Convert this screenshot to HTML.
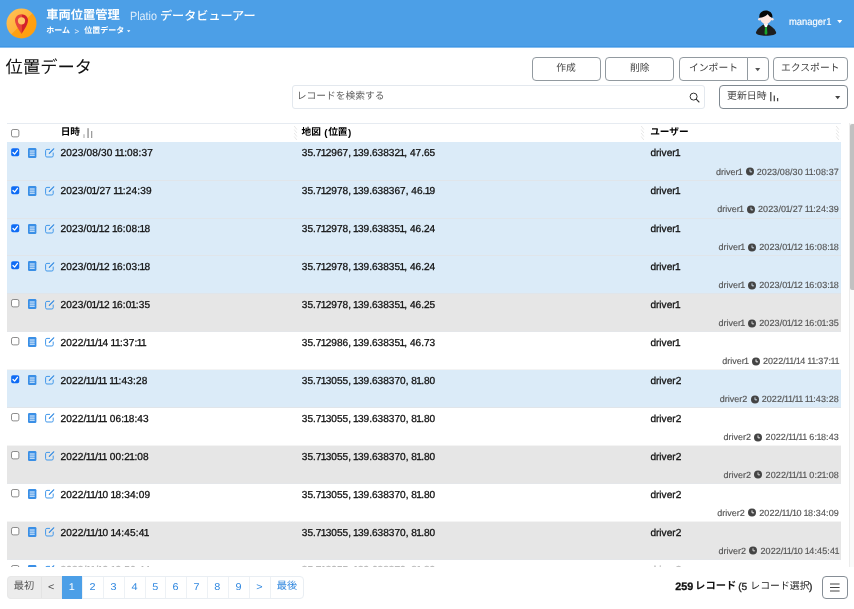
<!DOCTYPE html>
<html lang="ja"><head><meta charset="utf-8"><title>Platio</title><style>
html,body{margin:0;padding:0;background:#fff}
body{width:854px;height:609px;position:relative;overflow:hidden;font-family:"Liberation Sans","Noto Sans CJK JP",sans-serif;text-rendering:geometricPrecision}
.b,.a,.t,.j{position:absolute;display:block}
.b{box-sizing:border-box}
.t{line-height:1;white-space:nowrap;-webkit-text-stroke:.28px}
.p{text-align:center;font-size:9.9px;-webkit-text-stroke:0;transform:scaleX(1.1)}
.j{overflow:visible;line-height:1;font-family:"Liberation Sans","Noto Sans CJK JP",sans-serif}
.m{position:absolute;right:15.1px;height:9px;display:flex;align-items:center;font-size:9px;line-height:1;color:#555;white-space:nowrap;-webkit-text-stroke:.15px}
.m span{letter-spacing:.11px}
.m .u{letter-spacing:0}
.m svg{transform:translateY(-.4px)}
i{font-style:normal;margin:0 -.07em}
.j span{position:absolute;left:0;top:0;white-space:nowrap;line-height:1}
svg{overflow:visible}
#app{position:absolute;left:0;top:0;width:854px;height:609px;overflow:hidden}
#aa{position:absolute;left:0;top:0;width:1px;height:1px;mix-blend-mode:multiply}
</style></head>
<body>
<div id="app">
<div class="b" style="left:0px;top:0px;width:854px;height:46px;background:#4c9fe7"></div>
<div class="b" style="left:0px;top:46px;width:854px;height:1px;background:#3f97e5"></div>
<div class="b" style="left:0px;top:47px;width:854px;height:1px;background:#86bdee"></div>
<svg class="a" style="left:6px;top:8px" width="31" height="31" viewBox="0 0 31 31">
<defs><linearGradient id="lg" x1="0" y1="0" x2="1" y2="1"><stop offset="0" stop-color="#ffc35a"/><stop offset=".5" stop-color="#ffb23a"/><stop offset=".52" stop-color="#ffa114"/><stop offset="1" stop-color="#ff9e0f"/></linearGradient></defs>
<circle cx="15.5" cy="15.5" r="15" fill="url(#lg)"/>
<path d="M15.5 6.2c-3.6 0-6.5 2.8-6.5 6.2 0 4.5 6.5 13.3 6.5 13.3z" fill="#e8453c"/>
<path d="M15.5 6.2c3.6 0 6.5 2.8 6.5 6.2 0 4.5-6.5 13.3-6.5 13.3z" fill="#d3202b"/>
<circle cx="15.5" cy="12.8" r="3.6" fill="#ffc566"/>
</svg>
<div class="j" style="left:46.2px;top:9.3px;width:73.50px;height:12.25px;font-size:12.25px;color:#fff;font-weight:bold"><span>車両位置管理</span></div>
<span class="t" style="left:129.7px;top:9.8px;font-size:12px;color:rgba(255,255,255,.82);transform:scaleX(.9);transform-origin:0 0;-webkit-text-stroke:0">Platio</span>
<div class="j" style="left:160px;top:9.5px;width:96.80px;height:12.1px;font-size:12.1px;color:#fff;font-weight:500"><span>データビューアー</span></div>
<div class="j" style="left:46.3px;top:27.3px;width:24.00px;height:8px;font-size:8px;color:#fff;font-weight:bold"><span>ホーム</span></div>
<span class="t" style="left:74.5px;top:27.5px;font-size:8px;color:#e8f2fc;-webkit-text-stroke:0">&gt;</span>
<div class="j" style="left:84.3px;top:27.3px;width:40.00px;height:8px;font-size:8px;color:#fff;font-weight:bold"><span>位置データ</span></div>
<svg class="a" style="left:126.6px;top:30.1px" width="3.4" height="2.4" viewBox="0 0 8 5"><path d="M0 0h8L4 5z" fill="#fff"/></svg>
<svg class="a" style="left:755px;top:10px" width="23" height="26" viewBox="0 0 23 26">
<path d="M8.6 14.4C5 16.4 1.6 19.4.9 22.7c0 1.8 4.1 3 10 3s10.3-1.2 10.3-3c-.7-3.3-4-6.3-8-8.3z" fill="#1e1e1e"/>
<path d="M8.7 14l2.2 5.5L13.1 14z" fill="#fff"/>
<path d="M10 17h1.9l.5 6.6-1.4 1.5-1.5-1.5z" fill="#17a42b"/>
<circle cx="4.4" cy="9.3" r="1.3" fill="#fde5df"/><circle cx="17.3" cy="9.3" r="1.3" fill="#fde5df"/>
<path d="M5 8c0 3.5 3.5 5.6 5.8 6.9 2.3-1.3 5.8-3.4 5.8-6.9 0-5-11.6-5-11.6 0z" fill="#fde5df"/>
<path d="M4.4 7.7C3.6 3.5 6.8.6 10.8.6s7.3 2.9 6.5 7.1c-1.9-.3-3.7-1.6-4.6-3.6C11.5 6.1 8 7.7 4.4 7.7z" fill="#050505"/>
</svg>
<span class="t" style="left:788.6px;top:17.9px;font-size:10.2px;color:#fff;transform:scaleX(.925);transform-origin:0 0;-webkit-text-stroke:.15px">manager1</span>
<svg class="a" style="left:836.8px;top:20px" width="5.4" height="3.2" viewBox="0 0 8 5"><path d="M0 0h8L4 5z" fill="#fff"/></svg>
<div class="j" style="left:5.6px;top:59.1px;width:86.50px;height:17.3px;font-size:17.3px;color:#111"><span>位置データ</span></div>
<div class="b" style="left:532px;top:57.3px;width:68.5px;height:23.6px;border:1px solid #929aa0;border-radius:4px;background:#fff;"></div>
<div class="j" style="left:556.3px;top:64.2px;width:19.60px;height:9.8px;font-size:9.8px;color:#444"><span>作成</span></div>
<div class="b" style="left:605.3px;top:57.3px;width:68.5px;height:23.6px;border:1px solid #929aa0;border-radius:4px;background:#fff;"></div>
<div class="j" style="left:630px;top:64.2px;width:19.60px;height:9.8px;font-size:9.8px;color:#444"><span>削除</span></div>
<div class="b" style="left:679px;top:57.3px;width:68.7px;height:23.6px;border:1px solid #929aa0;border-radius:4px;background:#fff;border-radius:4px 0 0 4px"></div>
<div class="j" style="left:689px;top:64.2px;width:49.00px;height:9.8px;font-size:9.8px;color:#444"><span>インポート</span></div>
<div class="b" style="left:746.7px;top:57.3px;width:22px;height:23.6px;border:1px solid #929aa0;border-radius:4px;background:#fff;border-radius:0 4px 4px 0"></div>
<svg class="a" style="left:755px;top:67.9px" width="5.4" height="3.2" viewBox="0 0 8 5"><path d="M0 0h8L4 5z" fill="#555"/></svg>
<div class="b" style="left:773.3px;top:57.3px;width:74.4px;height:23.6px;border:1px solid #929aa0;border-radius:4px;background:#fff;"></div>
<div class="j" style="left:781px;top:64.2px;width:58.80px;height:9.8px;font-size:9.8px;color:#444"><span>エクスポート</span></div>
<div class="b" style="left:292.2px;top:85.4px;width:413.1px;height:23.2px;border:1px solid #e3e8ee;border-radius:3px;background:#fff"></div>
<div class="j" style="left:296.7px;top:91.9px;width:87.75px;height:9.75px;font-size:9.75px;color:#606060"><span>レコードを検索する</span></div>
<svg class="a" style="left:688.5px;top:92.3px" width="11" height="11" viewBox="0 0 11 11"><circle cx="4.6" cy="4.6" r="3.5" fill="none" stroke="#333" stroke-width="1"/><path d="M7.2 7.2L10 10" stroke="#333" stroke-width="1.1" stroke-linecap="round"/></svg>
<div class="b" style="left:718.9px;top:85.3px;width:128.9px;height:23.4px;border:1px solid #7f8890;border-radius:4px;background:#fff;"></div>
<div class="j" style="left:727.1px;top:92px;width:39.60px;height:9.9px;font-size:9.9px;color:#444"><span>更新日時</span></div>
<svg class="a" style="left:769.5px;top:92.2px" width="9" height="9.3" viewBox="0 0 9 9.3"><path d="M.8 0v9.3M4.3 3.4v5.9M7.6 6v3.3" stroke="#444" stroke-width="1.25"/></svg>
<svg class="a" style="left:834.5px;top:96px" width="5.4" height="3.2" viewBox="0 0 8 5"><path d="M0 0h8L4 5z" fill="#444"/></svg>
<div class="b" style="left:6.6px;top:122.9px;width:834.1999999999999px;height:1px;background:#e6ebf1"></div>
<svg class="a" style="left:10.9px;top:128.8px" width="8.4" height="8.4" viewBox="0 0 10 10"><rect x=".6" y=".6" width="8.8" height="8.8" rx="2" fill="#fff" stroke="#777" stroke-width="1"/></svg>
<div class="j" style="left:60.7px;top:128.4px;width:19.40px;height:9.7px;font-size:9.7px;color:#000;font-weight:bold"><span>日時</span></div>
<svg class="a" style="left:82.5px;top:127.8px" width="10" height="10" viewBox="0 0 10 10"><path d="M1 6.2v3.8" stroke="#b4b4b4" stroke-width="1.2"/><path d="M5.05 .2v9.8" stroke="#6c6c6c" stroke-width="1"/><path d="M8.7 3v7" stroke="#8c8c8c" stroke-width="1.1"/></svg>
<div class="j" style="left:301.6px;top:128.4px;width:19.40px;height:9.7px;font-size:9.7px;color:#000;font-weight:bold"><span>地図</span></div>
<span class="t" style="left:324.3px;top:128.5px;font-size:9.8px;color:#000;font-weight:bold;-webkit-text-stroke:0">(</span>
<div class="j" style="left:328.2px;top:128.4px;width:19.40px;height:9.7px;font-size:9.7px;color:#000;font-weight:bold"><span>位置</span></div>
<span class="t" style="left:348.1px;top:128.5px;font-size:9.8px;color:#000;font-weight:bold;-webkit-text-stroke:0">)</span>
<div class="j" style="left:650.2px;top:128.4px;width:38.80px;height:9.7px;font-size:9.7px;color:#000;font-weight:bold"><span>ユーザー</span></div>
<svg class="a" style="left:293.8px;top:126.2px" width="3" height="14" viewBox="0 0 3 14"><path d="M.2 0L2.8 3.5M.2 3.5L2.8 7M.2 7L2.8 10.5M.2 10.5L2.8 14" stroke="#dcdcdc" stroke-width=".7" fill="none"/></svg>
<svg class="a" style="left:641.4px;top:126.2px" width="3" height="14" viewBox="0 0 3 14"><path d="M.2 0L2.8 3.5M.2 3.5L2.8 7M.2 7L2.8 10.5M.2 10.5L2.8 14" stroke="#dcdcdc" stroke-width=".7" fill="none"/></svg>
<svg class="a" style="left:835.9px;top:126.2px" width="3" height="14" viewBox="0 0 3 14"><path d="M.2 0L2.8 3.5M.2 3.5L2.8 7M.2 7L2.8 10.5M.2 10.5L2.8 14" stroke="#dcdcdc" stroke-width=".7" fill="none"/></svg>
<div class="b" style="left:6.6px;top:142.2px;width:834.1999999999999px;height:38.43px;background:#dbebf8"></div>
<div class="b" style="left:6.6px;top:180.13px;width:834.1999999999999px;height:38.43px;background:#dbebf8"></div>
<div class="b" style="left:6.6px;top:218.06px;width:834.1999999999999px;height:38.43px;background:#dbebf8"></div>
<div class="b" style="left:6.6px;top:255.99px;width:834.1999999999999px;height:38.43px;background:#dbebf8"></div>
<div class="b" style="left:6.6px;top:293.92px;width:834.1999999999999px;height:38.43px;background:#e6e6e6"></div>
<div class="b" style="left:6.6px;top:331.85px;width:834.1999999999999px;height:38.43px;background:#fff"></div>
<div class="b" style="left:6.6px;top:369.78px;width:834.1999999999999px;height:38.43px;background:#dbebf8"></div>
<div class="b" style="left:6.6px;top:407.71px;width:834.1999999999999px;height:38.43px;background:#fff"></div>
<div class="b" style="left:6.6px;top:445.64px;width:834.1999999999999px;height:38.43px;background:#e6e6e6"></div>
<div class="b" style="left:6.6px;top:483.57px;width:834.1999999999999px;height:38.43px;background:#fff"></div>
<div class="b" style="left:6.6px;top:521.5px;width:834.1999999999999px;height:38.43px;background:#e6e6e6"></div>
<div class="b" style="left:6.6px;top:179.63px;width:834.1999999999999px;height:1px;background:#e0e5ea"></div>
<div class="b" style="left:6.6px;top:217.56px;width:834.1999999999999px;height:1px;background:#e0e5ea"></div>
<div class="b" style="left:6.6px;top:255.49px;width:834.1999999999999px;height:1px;background:#e0e5ea"></div>
<div class="b" style="left:6.6px;top:293.42px;width:834.1999999999999px;height:1px;background:#e0e5ea"></div>
<div class="b" style="left:6.6px;top:331.35px;width:834.1999999999999px;height:1px;background:#e4e6e9"></div>
<div class="b" style="left:6.6px;top:369.28px;width:834.1999999999999px;height:1px;background:#f4f4f4"></div>
<div class="b" style="left:6.6px;top:407.21px;width:834.1999999999999px;height:1px;background:#e0e5ea"></div>
<div class="b" style="left:6.6px;top:445.14px;width:834.1999999999999px;height:1px;background:#f4f4f4"></div>
<div class="b" style="left:6.6px;top:483.07px;width:834.1999999999999px;height:1px;background:#e4e6e9"></div>
<div class="b" style="left:6.6px;top:521.0px;width:834.1999999999999px;height:1px;background:#f4f4f4"></div>
<div class="b" style="left:6.6px;top:558.93px;width:834.1999999999999px;height:1px;background:#e4e6e9"></div>
<svg class="a" style="left:10.9px;top:147.7px" width="8.4" height="8.4" viewBox="0 0 10 10"><rect x=".2" y=".2" width="9.6" height="9.6" rx="2" fill="#0f6cf5"/><path d="M2.4 5.3l1.9 2 3.4-4.5" fill="none" stroke="#fff" stroke-width="1.5" stroke-linecap="round" stroke-linejoin="round"/></svg>
<svg class="a" style="left:28.2px;top:147.7px" width="8.4" height="10" viewBox="0 0 8.4 10"><rect width="8.4" height="10" rx="1.3" fill="#3a8fe6"/><path d="M1.7 3h5M1.7 5.1h5M1.7 7.2h5" stroke="#fff" stroke-width=".95"/></svg>
<svg class="a" style="left:44.8px;top:147.8px" width="9.6" height="9.6" viewBox="0 0 9.6 9.6"><path d="M5 1.4H1.9A1.3 1.3 0 0 0 .6 2.7v5A1.3 1.3 0 0 0 1.9 9h5a1.3 1.3 0 0 0 1.3-1.3V4.6" fill="none" stroke="#3f97ea" stroke-width="1"/><path d="M4.3 5.4L8.7.8" stroke="#2e88e2" stroke-width="1.2" stroke-linecap="round"/></svg>
<span class="t" style="left:60.5px;top:149px;font-size:10.1px;color:#111;letter-spacing:0.144px;">2023/08/30 <i>1</i><i>1</i>:08:37</span>
<span class="t" style="left:301.8px;top:149px;font-size:10.1px;color:#111;">35.7<i>1</i>2967, <i>1</i>39.63832<i>1</i>, 47.65</span>
<span class="t" style="left:650.4px;top:149px;font-size:10.1px;color:#111;">driver<i>1</i></span>
<div class="m" style="top:167.5px"><span class="u">driver<i>1</i></span><svg width="8" height="8" viewBox="0 0 10 10" style="margin:0 3.1px 0 3.4px;flex:none"><circle cx="5" cy="5" r="5" fill="#444"/><path d="M5 2.2V5.3H7.6" fill="none" stroke="#dbebf8" stroke-width="1.1"/></svg><span>2023/08/30 <i>1</i><i>1</i>:08:37</span></div>
<svg class="a" style="left:10.9px;top:185.63px" width="8.4" height="8.4" viewBox="0 0 10 10"><rect x=".2" y=".2" width="9.6" height="9.6" rx="2" fill="#0f6cf5"/><path d="M2.4 5.3l1.9 2 3.4-4.5" fill="none" stroke="#fff" stroke-width="1.5" stroke-linecap="round" stroke-linejoin="round"/></svg>
<svg class="a" style="left:28.2px;top:185.63px" width="8.4" height="10" viewBox="0 0 8.4 10"><rect width="8.4" height="10" rx="1.3" fill="#3a8fe6"/><path d="M1.7 3h5M1.7 5.1h5M1.7 7.2h5" stroke="#fff" stroke-width=".95"/></svg>
<svg class="a" style="left:44.8px;top:185.73px" width="9.6" height="9.6" viewBox="0 0 9.6 9.6"><path d="M5 1.4H1.9A1.3 1.3 0 0 0 .6 2.7v5A1.3 1.3 0 0 0 1.9 9h5a1.3 1.3 0 0 0 1.3-1.3V4.6" fill="none" stroke="#3f97ea" stroke-width="1"/><path d="M4.3 5.4L8.7.8" stroke="#2e88e2" stroke-width="1.2" stroke-linecap="round"/></svg>
<span class="t" style="left:60.5px;top:187px;font-size:10.1px;color:#111;letter-spacing:0.144px;">2023/0<i>1</i>/27 <i>1</i><i>1</i>:24:39</span>
<span class="t" style="left:301.8px;top:187px;font-size:10.1px;color:#111;">35.7<i>1</i>2978, <i>1</i>39.638367, 46.<i>1</i>9</span>
<span class="t" style="left:650.4px;top:187px;font-size:10.1px;color:#111;">driver<i>1</i></span>
<div class="m" style="top:205.43px"><span class="u">driver<i>1</i></span><svg width="8" height="8" viewBox="0 0 10 10" style="margin:0 3.1px 0 3.4px;flex:none"><circle cx="5" cy="5" r="5" fill="#444"/><path d="M5 2.2V5.3H7.6" fill="none" stroke="#dbebf8" stroke-width="1.1"/></svg><span>2023/0<i>1</i>/27 <i>1</i><i>1</i>:24:39</span></div>
<svg class="a" style="left:10.9px;top:223.56px" width="8.4" height="8.4" viewBox="0 0 10 10"><rect x=".2" y=".2" width="9.6" height="9.6" rx="2" fill="#0f6cf5"/><path d="M2.4 5.3l1.9 2 3.4-4.5" fill="none" stroke="#fff" stroke-width="1.5" stroke-linecap="round" stroke-linejoin="round"/></svg>
<svg class="a" style="left:28.2px;top:223.56px" width="8.4" height="10" viewBox="0 0 8.4 10"><rect width="8.4" height="10" rx="1.3" fill="#3a8fe6"/><path d="M1.7 3h5M1.7 5.1h5M1.7 7.2h5" stroke="#fff" stroke-width=".95"/></svg>
<svg class="a" style="left:44.8px;top:223.66px" width="9.6" height="9.6" viewBox="0 0 9.6 9.6"><path d="M5 1.4H1.9A1.3 1.3 0 0 0 .6 2.7v5A1.3 1.3 0 0 0 1.9 9h5a1.3 1.3 0 0 0 1.3-1.3V4.6" fill="none" stroke="#3f97ea" stroke-width="1"/><path d="M4.3 5.4L8.7.8" stroke="#2e88e2" stroke-width="1.2" stroke-linecap="round"/></svg>
<span class="t" style="left:60.5px;top:225px;font-size:10.1px;color:#111;letter-spacing:0.144px;">2023/0<i>1</i>/<i>1</i>2 <i>1</i>6:08:<i>1</i>8</span>
<span class="t" style="left:301.8px;top:225px;font-size:10.1px;color:#111;">35.7<i>1</i>2978, <i>1</i>39.63835<i>1</i>, 46.24</span>
<span class="t" style="left:650.4px;top:225px;font-size:10.1px;color:#111;">driver<i>1</i></span>
<div class="m" style="top:243.36px"><span class="u">driver<i>1</i></span><svg width="8" height="8" viewBox="0 0 10 10" style="margin:0 3.1px 0 3.4px;flex:none"><circle cx="5" cy="5" r="5" fill="#444"/><path d="M5 2.2V5.3H7.6" fill="none" stroke="#dbebf8" stroke-width="1.1"/></svg><span>2023/0<i>1</i>/<i>1</i>2 <i>1</i>6:08:<i>1</i>8</span></div>
<svg class="a" style="left:10.9px;top:261.49px" width="8.4" height="8.4" viewBox="0 0 10 10"><rect x=".2" y=".2" width="9.6" height="9.6" rx="2" fill="#0f6cf5"/><path d="M2.4 5.3l1.9 2 3.4-4.5" fill="none" stroke="#fff" stroke-width="1.5" stroke-linecap="round" stroke-linejoin="round"/></svg>
<svg class="a" style="left:28.2px;top:261.49px" width="8.4" height="10" viewBox="0 0 8.4 10"><rect width="8.4" height="10" rx="1.3" fill="#3a8fe6"/><path d="M1.7 3h5M1.7 5.1h5M1.7 7.2h5" stroke="#fff" stroke-width=".95"/></svg>
<svg class="a" style="left:44.8px;top:261.59px" width="9.6" height="9.6" viewBox="0 0 9.6 9.6"><path d="M5 1.4H1.9A1.3 1.3 0 0 0 .6 2.7v5A1.3 1.3 0 0 0 1.9 9h5a1.3 1.3 0 0 0 1.3-1.3V4.6" fill="none" stroke="#3f97ea" stroke-width="1"/><path d="M4.3 5.4L8.7.8" stroke="#2e88e2" stroke-width="1.2" stroke-linecap="round"/></svg>
<span class="t" style="left:60.5px;top:263px;font-size:10.1px;color:#111;letter-spacing:0.144px;">2023/0<i>1</i>/<i>1</i>2 <i>1</i>6:03:<i>1</i>8</span>
<span class="t" style="left:301.8px;top:263px;font-size:10.1px;color:#111;">35.7<i>1</i>2978, <i>1</i>39.63835<i>1</i>, 46.24</span>
<span class="t" style="left:650.4px;top:263px;font-size:10.1px;color:#111;">driver<i>1</i></span>
<div class="m" style="top:281.29px"><span class="u">driver<i>1</i></span><svg width="8" height="8" viewBox="0 0 10 10" style="margin:0 3.1px 0 3.4px;flex:none"><circle cx="5" cy="5" r="5" fill="#444"/><path d="M5 2.2V5.3H7.6" fill="none" stroke="#dbebf8" stroke-width="1.1"/></svg><span>2023/0<i>1</i>/<i>1</i>2 <i>1</i>6:03:<i>1</i>8</span></div>
<svg class="a" style="left:10.9px;top:299.41999999999996px" width="8.4" height="8.4" viewBox="0 0 10 10"><rect x=".6" y=".6" width="8.8" height="8.8" rx="2" fill="#fff" stroke="#777" stroke-width="1"/></svg>
<svg class="a" style="left:28.2px;top:299.42px" width="8.4" height="10" viewBox="0 0 8.4 10"><rect width="8.4" height="10" rx="1.3" fill="#3a8fe6"/><path d="M1.7 3h5M1.7 5.1h5M1.7 7.2h5" stroke="#fff" stroke-width=".95"/></svg>
<svg class="a" style="left:44.8px;top:299.52px" width="9.6" height="9.6" viewBox="0 0 9.6 9.6"><path d="M5 1.4H1.9A1.3 1.3 0 0 0 .6 2.7v5A1.3 1.3 0 0 0 1.9 9h5a1.3 1.3 0 0 0 1.3-1.3V4.6" fill="none" stroke="#3f97ea" stroke-width="1"/><path d="M4.3 5.4L8.7.8" stroke="#2e88e2" stroke-width="1.2" stroke-linecap="round"/></svg>
<span class="t" style="left:60.5px;top:301px;font-size:10.1px;color:#111;letter-spacing:0.144px;">2023/0<i>1</i>/<i>1</i>2 <i>1</i>6:0<i>1</i>:35</span>
<span class="t" style="left:301.8px;top:301px;font-size:10.1px;color:#111;">35.7<i>1</i>2978, <i>1</i>39.63835<i>1</i>, 46.25</span>
<span class="t" style="left:650.4px;top:301px;font-size:10.1px;color:#111;">driver<i>1</i></span>
<div class="m" style="top:319.22px"><span class="u">driver<i>1</i></span><svg width="8" height="8" viewBox="0 0 10 10" style="margin:0 3.1px 0 3.4px;flex:none"><circle cx="5" cy="5" r="5" fill="#444"/><path d="M5 2.2V5.3H7.6" fill="none" stroke="#e6e6e6" stroke-width="1.1"/></svg><span>2023/0<i>1</i>/<i>1</i>2 <i>1</i>6:0<i>1</i>:35</span></div>
<svg class="a" style="left:10.9px;top:337.35px" width="8.4" height="8.4" viewBox="0 0 10 10"><rect x=".6" y=".6" width="8.8" height="8.8" rx="2" fill="#fff" stroke="#777" stroke-width="1"/></svg>
<svg class="a" style="left:28.2px;top:337.35px" width="8.4" height="10" viewBox="0 0 8.4 10"><rect width="8.4" height="10" rx="1.3" fill="#3a8fe6"/><path d="M1.7 3h5M1.7 5.1h5M1.7 7.2h5" stroke="#fff" stroke-width=".95"/></svg>
<svg class="a" style="left:44.8px;top:337.45px" width="9.6" height="9.6" viewBox="0 0 9.6 9.6"><path d="M5 1.4H1.9A1.3 1.3 0 0 0 .6 2.7v5A1.3 1.3 0 0 0 1.9 9h5a1.3 1.3 0 0 0 1.3-1.3V4.6" fill="none" stroke="#3f97ea" stroke-width="1"/><path d="M4.3 5.4L8.7.8" stroke="#2e88e2" stroke-width="1.2" stroke-linecap="round"/></svg>
<span class="t" style="left:60.5px;top:339px;font-size:10.1px;color:#111;letter-spacing:0.144px;">2022/<i>1</i><i>1</i>/<i>1</i>4 <i>1</i><i>1</i>:37:<i>1</i><i>1</i></span>
<span class="t" style="left:301.8px;top:339px;font-size:10.1px;color:#111;">35.7<i>1</i>2986, <i>1</i>39.63835<i>1</i>, 46.73</span>
<span class="t" style="left:650.4px;top:339px;font-size:10.1px;color:#111;">driver<i>1</i></span>
<div class="m" style="top:357.15px"><span class="u">driver<i>1</i></span><svg width="8" height="8" viewBox="0 0 10 10" style="margin:0 3.1px 0 3.4px;flex:none"><circle cx="5" cy="5" r="5" fill="#444"/><path d="M5 2.2V5.3H7.6" fill="none" stroke="#fff" stroke-width="1.1"/></svg><span>2022/<i>1</i><i>1</i>/<i>1</i>4 <i>1</i><i>1</i>:37:<i>1</i><i>1</i></span></div>
<svg class="a" style="left:10.9px;top:375.28px" width="8.4" height="8.4" viewBox="0 0 10 10"><rect x=".2" y=".2" width="9.6" height="9.6" rx="2" fill="#0f6cf5"/><path d="M2.4 5.3l1.9 2 3.4-4.5" fill="none" stroke="#fff" stroke-width="1.5" stroke-linecap="round" stroke-linejoin="round"/></svg>
<svg class="a" style="left:28.2px;top:375.28px" width="8.4" height="10" viewBox="0 0 8.4 10"><rect width="8.4" height="10" rx="1.3" fill="#3a8fe6"/><path d="M1.7 3h5M1.7 5.1h5M1.7 7.2h5" stroke="#fff" stroke-width=".95"/></svg>
<svg class="a" style="left:44.8px;top:375.38px" width="9.6" height="9.6" viewBox="0 0 9.6 9.6"><path d="M5 1.4H1.9A1.3 1.3 0 0 0 .6 2.7v5A1.3 1.3 0 0 0 1.9 9h5a1.3 1.3 0 0 0 1.3-1.3V4.6" fill="none" stroke="#3f97ea" stroke-width="1"/><path d="M4.3 5.4L8.7.8" stroke="#2e88e2" stroke-width="1.2" stroke-linecap="round"/></svg>
<span class="t" style="left:60.5px;top:377px;font-size:10.1px;color:#111;letter-spacing:0.144px;">2022/<i>1</i><i>1</i>/<i>1</i><i>1</i> <i>1</i><i>1</i>:43:28</span>
<span class="t" style="left:301.8px;top:377px;font-size:10.1px;color:#111;">35.7<i>1</i>3055, <i>1</i>39.638370, 8<i>1</i>.80</span>
<span class="t" style="left:650.4px;top:377px;font-size:10.1px;color:#111;">driver2</span>
<div class="m" style="top:395.08px"><span class="u">driver2</span><svg width="8" height="8" viewBox="0 0 10 10" style="margin:0 3.1px 0 3.4px;flex:none"><circle cx="5" cy="5" r="5" fill="#444"/><path d="M5 2.2V5.3H7.6" fill="none" stroke="#dbebf8" stroke-width="1.1"/></svg><span>2022/<i>1</i><i>1</i>/<i>1</i><i>1</i> <i>1</i><i>1</i>:43:28</span></div>
<svg class="a" style="left:10.9px;top:413.21px" width="8.4" height="8.4" viewBox="0 0 10 10"><rect x=".6" y=".6" width="8.8" height="8.8" rx="2" fill="#fff" stroke="#777" stroke-width="1"/></svg>
<svg class="a" style="left:28.2px;top:413.21px" width="8.4" height="10" viewBox="0 0 8.4 10"><rect width="8.4" height="10" rx="1.3" fill="#3a8fe6"/><path d="M1.7 3h5M1.7 5.1h5M1.7 7.2h5" stroke="#fff" stroke-width=".95"/></svg>
<svg class="a" style="left:44.8px;top:413.31px" width="9.6" height="9.6" viewBox="0 0 9.6 9.6"><path d="M5 1.4H1.9A1.3 1.3 0 0 0 .6 2.7v5A1.3 1.3 0 0 0 1.9 9h5a1.3 1.3 0 0 0 1.3-1.3V4.6" fill="none" stroke="#3f97ea" stroke-width="1"/><path d="M4.3 5.4L8.7.8" stroke="#2e88e2" stroke-width="1.2" stroke-linecap="round"/></svg>
<span class="t" style="left:60.5px;top:415px;font-size:10.1px;color:#111;letter-spacing:0.144px;">2022/<i>1</i><i>1</i>/<i>1</i><i>1</i> 06:<i>1</i>8:43</span>
<span class="t" style="left:301.8px;top:415px;font-size:10.1px;color:#111;">35.7<i>1</i>3055, <i>1</i>39.638370, 8<i>1</i>.80</span>
<span class="t" style="left:650.4px;top:415px;font-size:10.1px;color:#111;">driver2</span>
<div class="m" style="top:433.01px"><span class="u">driver2</span><svg width="8" height="8" viewBox="0 0 10 10" style="margin:0 3.1px 0 3.4px;flex:none"><circle cx="5" cy="5" r="5" fill="#444"/><path d="M5 2.2V5.3H7.6" fill="none" stroke="#fff" stroke-width="1.1"/></svg><span>2022/<i>1</i><i>1</i>/<i>1</i><i>1</i> 6:<i>1</i>8:43</span></div>
<svg class="a" style="left:10.9px;top:451.14px" width="8.4" height="8.4" viewBox="0 0 10 10"><rect x=".6" y=".6" width="8.8" height="8.8" rx="2" fill="#fff" stroke="#777" stroke-width="1"/></svg>
<svg class="a" style="left:28.2px;top:451.14px" width="8.4" height="10" viewBox="0 0 8.4 10"><rect width="8.4" height="10" rx="1.3" fill="#3a8fe6"/><path d="M1.7 3h5M1.7 5.1h5M1.7 7.2h5" stroke="#fff" stroke-width=".95"/></svg>
<svg class="a" style="left:44.8px;top:451.24px" width="9.6" height="9.6" viewBox="0 0 9.6 9.6"><path d="M5 1.4H1.9A1.3 1.3 0 0 0 .6 2.7v5A1.3 1.3 0 0 0 1.9 9h5a1.3 1.3 0 0 0 1.3-1.3V4.6" fill="none" stroke="#3f97ea" stroke-width="1"/><path d="M4.3 5.4L8.7.8" stroke="#2e88e2" stroke-width="1.2" stroke-linecap="round"/></svg>
<span class="t" style="left:60.5px;top:453px;font-size:10.1px;color:#111;letter-spacing:0.144px;">2022/<i>1</i><i>1</i>/<i>1</i><i>1</i> 00:2<i>1</i>:08</span>
<span class="t" style="left:301.8px;top:453px;font-size:10.1px;color:#111;">35.7<i>1</i>3055, <i>1</i>39.638370, 8<i>1</i>.80</span>
<span class="t" style="left:650.4px;top:453px;font-size:10.1px;color:#111;">driver2</span>
<div class="m" style="top:470.94px"><span class="u">driver2</span><svg width="8" height="8" viewBox="0 0 10 10" style="margin:0 3.1px 0 3.4px;flex:none"><circle cx="5" cy="5" r="5" fill="#444"/><path d="M5 2.2V5.3H7.6" fill="none" stroke="#e6e6e6" stroke-width="1.1"/></svg><span>2022/<i>1</i><i>1</i>/<i>1</i><i>1</i> 0:2<i>1</i>:08</span></div>
<svg class="a" style="left:10.9px;top:489.07px" width="8.4" height="8.4" viewBox="0 0 10 10"><rect x=".6" y=".6" width="8.8" height="8.8" rx="2" fill="#fff" stroke="#777" stroke-width="1"/></svg>
<svg class="a" style="left:28.2px;top:489.07px" width="8.4" height="10" viewBox="0 0 8.4 10"><rect width="8.4" height="10" rx="1.3" fill="#3a8fe6"/><path d="M1.7 3h5M1.7 5.1h5M1.7 7.2h5" stroke="#fff" stroke-width=".95"/></svg>
<svg class="a" style="left:44.8px;top:489.17px" width="9.6" height="9.6" viewBox="0 0 9.6 9.6"><path d="M5 1.4H1.9A1.3 1.3 0 0 0 .6 2.7v5A1.3 1.3 0 0 0 1.9 9h5a1.3 1.3 0 0 0 1.3-1.3V4.6" fill="none" stroke="#3f97ea" stroke-width="1"/><path d="M4.3 5.4L8.7.8" stroke="#2e88e2" stroke-width="1.2" stroke-linecap="round"/></svg>
<span class="t" style="left:60.5px;top:491px;font-size:10.1px;color:#111;letter-spacing:0.144px;">2022/<i>1</i><i>1</i>/<i>1</i>0 <i>1</i>8:34:09</span>
<span class="t" style="left:301.8px;top:491px;font-size:10.1px;color:#111;">35.7<i>1</i>3055, <i>1</i>39.638370, 8<i>1</i>.80</span>
<span class="t" style="left:650.4px;top:491px;font-size:10.1px;color:#111;">driver2</span>
<div class="m" style="top:508.87px"><span class="u">driver2</span><svg width="8" height="8" viewBox="0 0 10 10" style="margin:0 3.1px 0 3.4px;flex:none"><circle cx="5" cy="5" r="5" fill="#444"/><path d="M5 2.2V5.3H7.6" fill="none" stroke="#fff" stroke-width="1.1"/></svg><span>2022/<i>1</i><i>1</i>/<i>1</i>0 <i>1</i>8:34:09</span></div>
<svg class="a" style="left:10.9px;top:527.0px" width="8.4" height="8.4" viewBox="0 0 10 10"><rect x=".6" y=".6" width="8.8" height="8.8" rx="2" fill="#fff" stroke="#777" stroke-width="1"/></svg>
<svg class="a" style="left:28.2px;top:527.0px" width="8.4" height="10" viewBox="0 0 8.4 10"><rect width="8.4" height="10" rx="1.3" fill="#3a8fe6"/><path d="M1.7 3h5M1.7 5.1h5M1.7 7.2h5" stroke="#fff" stroke-width=".95"/></svg>
<svg class="a" style="left:44.8px;top:527.1px" width="9.6" height="9.6" viewBox="0 0 9.6 9.6"><path d="M5 1.4H1.9A1.3 1.3 0 0 0 .6 2.7v5A1.3 1.3 0 0 0 1.9 9h5a1.3 1.3 0 0 0 1.3-1.3V4.6" fill="none" stroke="#3f97ea" stroke-width="1"/><path d="M4.3 5.4L8.7.8" stroke="#2e88e2" stroke-width="1.2" stroke-linecap="round"/></svg>
<span class="t" style="left:60.5px;top:529px;font-size:10.1px;color:#111;letter-spacing:0.144px;">2022/<i>1</i><i>1</i>/<i>1</i>0 <i>1</i>4:45:4<i>1</i></span>
<span class="t" style="left:301.8px;top:529px;font-size:10.1px;color:#111;">35.7<i>1</i>3055, <i>1</i>39.638370, 8<i>1</i>.80</span>
<span class="t" style="left:650.4px;top:529px;font-size:10.1px;color:#111;">driver2</span>
<div class="m" style="top:546.8px"><span class="u">driver2</span><svg width="8" height="8" viewBox="0 0 10 10" style="margin:0 3.1px 0 3.4px;flex:none"><circle cx="5" cy="5" r="5" fill="#444"/><path d="M5 2.2V5.3H7.6" fill="none" stroke="#e6e6e6" stroke-width="1.1"/></svg><span>2022/<i>1</i><i>1</i>/<i>1</i>0 <i>1</i>4:45:4<i>1</i></span></div>
<div class="b" style="left:0;top:559.4300000000001px;width:849px;height:7.17px;overflow:hidden">
<div style="position:absolute;left:0;top:-559.4300000000001px;width:854px;height:609px">
<svg class="a" style="left:10.9px;top:564.9300000000001px" width="8.4" height="8.4" viewBox="0 0 10 10"><rect x=".6" y=".6" width="8.8" height="8.8" rx="2" fill="#fff" stroke="#777" stroke-width="1"/></svg>
<svg class="a" style="left:28.2px;top:564.93px" width="8.4" height="10" viewBox="0 0 8.4 10"><rect width="8.4" height="10" rx="1.3" fill="#3a8fe6"/><path d="M1.7 3h5M1.7 5.1h5M1.7 7.2h5" stroke="#fff" stroke-width=".95"/></svg>
<svg class="a" style="left:44.8px;top:565.03px" width="9.6" height="9.6" viewBox="0 0 9.6 9.6"><path d="M5 1.4H1.9A1.3 1.3 0 0 0 .6 2.7v5A1.3 1.3 0 0 0 1.9 9h5a1.3 1.3 0 0 0 1.3-1.3V4.6" fill="none" stroke="#3f97ea" stroke-width="1"/><path d="M4.3 5.4L8.7.8" stroke="#2e88e2" stroke-width="1.2" stroke-linecap="round"/></svg>
<span class="t" style="left:60.5px;top:566px;font-size:10.1px;color:#b4b4b4;letter-spacing:0.144px;">2022/<i>1</i><i>1</i>/<i>1</i>0 <i>1</i>0:56:44</span>
<span class="t" style="left:301.8px;top:566px;font-size:10.1px;color:#b4b4b4;">35.7<i>1</i>3055, <i>1</i>39.638370, 8<i>1</i>.80</span>
<span class="t" style="left:650.4px;top:566px;font-size:10.1px;color:#b4b4b4;">driver2</span>
</div></div>
<div class="b" style="left:848.6px;top:123.4px;width:1px;height:443.8px;background:#ececec"></div>
<div class="b" style="left:849.6px;top:123.4px;width:4.4px;height:443.8px;background:#fafafa"></div>
<div class="b" style="left:850.2px;top:124.2px;width:3.8px;height:166px;background:#c1c1c1;border-radius:2px 0 0 2px"></div>
<div class="b" style="left:6.7px;top:576.2px;width:297.6px;height:22.8px;border:1px solid #e9eef3;border-radius:4px;background:#fff;box-sizing:border-box"></div>
<div class="b" style="left:6.7px;top:576.2px;width:55.3px;height:22.8px;background:#ececec;border-radius:4px 0 0 4px;border:1px solid #e8e8e8;box-sizing:border-box"></div>
<div class="b" style="left:41.2px;top:577.2px;width:0.8px;height:20.8px;background:#e3e3e3"></div>
<div class="b" style="left:62.0px;top:576.2px;width:19.8px;height:22.8px;background:#4c9fe7"></div>
<div class="b" style="left:81.8px;top:577.2px;width:0.8px;height:20.8px;background:#edf1f5"></div>
<div class="b" style="left:102.7px;top:577.2px;width:0.8px;height:20.8px;background:#edf1f5"></div>
<div class="b" style="left:123.6px;top:577.2px;width:0.8px;height:20.8px;background:#edf1f5"></div>
<div class="b" style="left:144.5px;top:577.2px;width:0.8px;height:20.8px;background:#edf1f5"></div>
<div class="b" style="left:165.3px;top:577.2px;width:0.8px;height:20.8px;background:#edf1f5"></div>
<div class="b" style="left:186.2px;top:577.2px;width:0.8px;height:20.8px;background:#edf1f5"></div>
<div class="b" style="left:207.1px;top:577.2px;width:0.8px;height:20.8px;background:#edf1f5"></div>
<div class="b" style="left:227.9px;top:577.2px;width:0.8px;height:20.8px;background:#edf1f5"></div>
<div class="b" style="left:248.8px;top:577.2px;width:0.8px;height:20.8px;background:#edf1f5"></div>
<div class="b" style="left:269.7px;top:577.2px;width:0.8px;height:20.8px;background:#edf1f5"></div>
<div class="j" style="left:13.85px;top:582.4000000000001px;width:20.40px;height:10.2px;font-size:10.2px;color:#555"><span>最初</span></div>
<span class="t p" style="left:41.4px;width:20.60px;top:583.0px;color:#444">&lt;</span>
<span class="t p" style="left:62.0px;width:19.80px;top:583.0px;color:#fff">1</span>
<span class="t p" style="left:81.8px;width:20.90px;top:583.0px;color:#3389e0">2</span>
<span class="t p" style="left:102.7px;width:20.90px;top:583.0px;color:#3389e0">3</span>
<span class="t p" style="left:123.6px;width:20.90px;top:583.0px;color:#3389e0">4</span>
<span class="t p" style="left:144.5px;width:20.80px;top:583.0px;color:#3389e0">5</span>
<span class="t p" style="left:165.3px;width:20.90px;top:583.0px;color:#3389e0">6</span>
<span class="t p" style="left:186.2px;width:20.90px;top:583.0px;color:#3389e0">7</span>
<span class="t p" style="left:207.1px;width:20.80px;top:583.0px;color:#3389e0">8</span>
<span class="t p" style="left:227.9px;width:20.90px;top:583.0px;color:#3389e0">9</span>
<span class="t p" style="left:248.8px;width:20.90px;top:583.0px;color:#3389e0">&gt;</span>
<div class="j" style="left:276.8px;top:582.4000000000001px;width:20.40px;height:10.2px;font-size:10.2px;color:#2f86de"><span>最後</span></div>
<span class="t" style="left:675.3px;top:582.3px;font-size:10.8px;color:#111;font-weight:bold;">259</span>
<div class="j" style="left:695.1px;top:582.2px;width:41.20px;height:10.3px;font-size:10.3px;color:#111;font-weight:bold"><span>レコード</span></div>
<span class="t" style="left:738.2px;top:582.6px;font-size:10.2px;color:#222;">(5</span>
<div class="j" style="left:750.3px;top:582.4px;width:59.40px;height:9.9px;font-size:9.9px;color:#222"><span>レコード選択</span></div>
<span class="t" style="left:808.9px;top:582.6px;font-size:10.2px;color:#222;">)</span>
<div class="b" style="left:822.1px;top:575.9px;width:25.8px;height:23.4px;border:1px solid #868e96;border-radius:4px;background:#fff;"></div>
<svg class="a" style="left:830.3px;top:583.2px" width="9.6" height="9" viewBox="0 0 9.6 9"><path d="M0 1h9.6M0 4.5h9.6M0 8h9.6" stroke="#444" stroke-width="1.1"/></svg>
<div id="aa"></div>
</div>
</body></html>
